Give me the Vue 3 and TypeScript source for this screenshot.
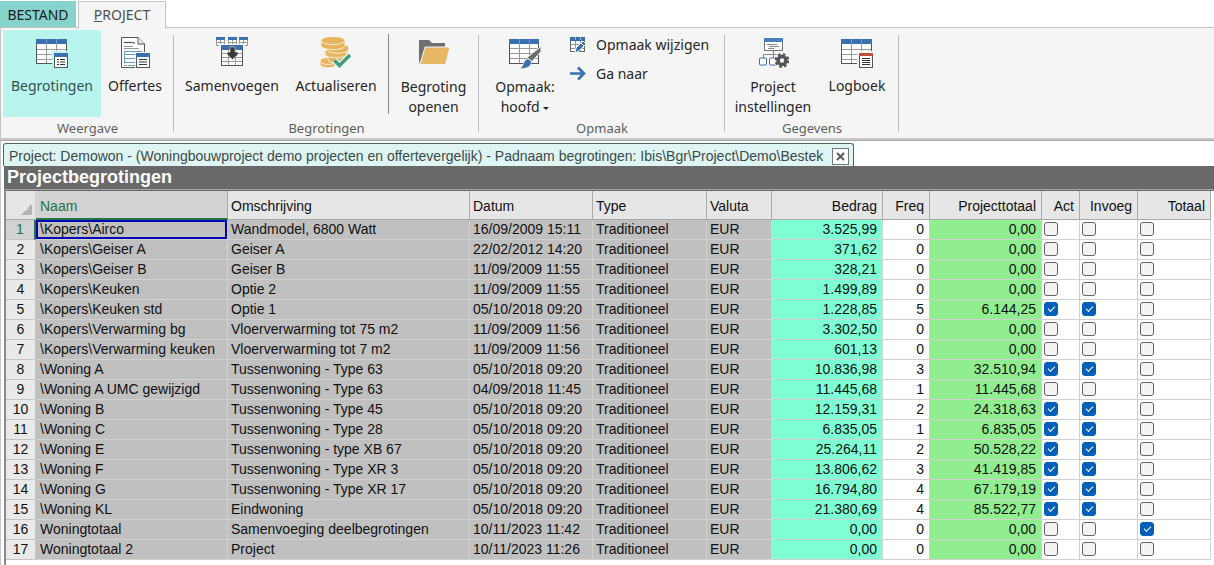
<script setup lang="ts">
import { ref } from 'vue'

interface Row {
  naam: string
  omschrijving: string
  datum: string
  bedrag: string
  freq: number
  totaal: string
  act: boolean
  invoeg: boolean
  tot: boolean
}

function row(naam: string, omschrijving: string, datum: string, bedrag: string, freq: number, totaal: string, actief = false, tot = false): Row {
  return { naam, omschrijving, datum, bedrag, freq, totaal, act: actief, invoeg: actief, tot }
}

const rows = ref<Row[]>([
  row('\\Kopers\\Airco', 'Wandmodel, 6800 Watt', '16/09/2009 15:11', '3.525,99', 0, '0,00'),
  row('\\Kopers\\Geiser A', 'Geiser A', '22/02/2012 14:20', '371,62', 0, '0,00'),
  row('\\Kopers\\Geiser B', 'Geiser B', '11/09/2009 11:55', '328,21', 0, '0,00'),
  row('\\Kopers\\Keuken', 'Optie 2', '11/09/2009 11:55', '1.499,89', 0, '0,00'),
  row('\\Kopers\\Keuken std', 'Optie 1', '05/10/2018 09:20', '1.228,85', 5, '6.144,25', true),
  row('\\Kopers\\Verwarming bg', 'Vloerverwarming tot 75 m2', '11/09/2009 11:56', '3.302,50', 0, '0,00'),
  row('\\Kopers\\Verwarming keuken', 'Vloerverwarming tot 7 m2', '11/09/2009 11:56', '601,13', 0, '0,00'),
  row('\\Woning A', 'Tussenwoning - Type 63', '05/10/2018 09:20', '10.836,98', 3, '32.510,94', true),
  row('\\Woning A UMC gewijzigd', 'Tussenwoning - Type 63', '04/09/2018 11:45', '11.445,68', 1, '11.445,68'),
  row('\\Woning B', 'Tussenwoning - Type 45', '05/10/2018 09:20', '12.159,31', 2, '24.318,63', true),
  row('\\Woning C', 'Tussenwoning - Type 28', '05/10/2018 09:20', '6.835,05', 1, '6.835,05', true),
  row('\\Woning E', 'Tussenwoning - type XB 67', '05/10/2018 09:20', '25.264,11', 2, '50.528,22', true),
  row('\\Woning F', 'Tussenwoning - Type XR 3', '05/10/2018 09:20', '13.806,62', 3, '41.419,85', true),
  row('\\Woning G', 'Tussenwoning - Type XR 17', '05/10/2018 09:20', '16.794,80', 4, '67.179,19', true),
  row('\\Woning KL', 'Eindwoning', '05/10/2018 09:20', '21.380,69', 4, '85.522,77', true),
  row('Woningtotaal', 'Samenvoeging deelbegrotingen', '10/11/2023 11:42', '0,00', 0, '0,00', false, true),
  row('Woningtotaal 2', 'Project', '10/11/2023 11:26', '0,00', 0, '0,00'),
])
const selected = ref(0)
</script>

<template>
  <div class="app">
    <nav class="tabs">
      <button class="tab file">BESTAND</button>
      <button class="tab current"><u>P</u>ROJECT</button>
    </nav>

    <header class="ribbon">
      <section class="group weergave">
        <div class="tools">
          <button class="big on">
            <svg class="icon" viewBox="0 0 32 32">
              <rect x=".5" y="2.5" width="30" height="24" fill="#fff" stroke="#555" />
              <path d="M1 12.5H30M1 17.5H30M1 22.5H30M10.5 7V26M20.5 7V26" stroke="#9a9a9a" fill="none" />
              <rect x="0" y="2" width="31" height="5" fill="#3a70ad" /><path d="M10.5 2V7M20.5 2V7" stroke="#6f9bc9" />
              <rect x="16" y="14" width="16" height="18" fill="#b9f5ee" />
              <rect x="18.5" y="16.5" width="13" height="14" fill="#fff" stroke="#555" />
              <rect x="18" y="16" width="14" height="4" fill="#3a70ad" />
              <path d="M21 22.5h2M24 22.5h5M21 25h2M24 25h5M21 27.5h2M24 27.5h5" stroke="#333" />
            </svg>
            <span>Begrotingen</span>
          </button>
          <button class="big">
            <svg class="icon" viewBox="0 0 32 32">
              <path d="M2.5.5H19L25.5 7V30.5H2.5Z" fill="#fff" stroke="#555" />
              <path d="M19 .5V7H25.5" fill="#eee" stroke="#555" />
              <path d="M5 6l1-1 2 1 1-1 2 1 1-1 2 1h2" stroke="#333" fill="none" />
              <path d="M5 9.5H14M5 11.5H20" stroke="#999" />
              <path d="M5 14.5H23M5.5 17.5H16M5.5 21.5H16M5 25.5H16M9 28.5H16" stroke="#6a9acb" />
              <path d="M5 28.5H8M5.5 14V25" stroke="#6a9acb" />
              <rect x="16" y="15" width="16" height="17" fill="#f5f5f5" />
              <rect x="17.5" y="16.5" width="13" height="14" fill="#fff" stroke="#555" />
              <rect x="17" y="16" width="14" height="4" fill="#3a70ad" />
              <path d="M20 22.5h8M20 25h8M20 27.5h8" stroke="#333" />
            </svg>
            <span>Offertes</span>
          </button>
        </div>
        <h2>Weergave</h2>
      </section>

      <section class="group begrotingen">
        <div class="tools">
          <button class="big wide">
            <svg class="icon" viewBox="0 0 32 32">
              <g v-for="x in [0, 12, 23]" :key="x">
                <path :d="`M${x + 0.5} 1V8.5H${x + 8.5}V1M${x + 4.5} 3V8M${x + 1} 5.5H${x + 8}`" fill="#fff" stroke="#999" />
                <rect :x="x" y="0" width="9" height="3" fill="#3a70ad" />
              </g>
              <rect x="3" y="7" width="26" height="23" fill="#f5f5f5" />
              <rect x="5.5" y="8.5" width="21" height="20" fill="#fff" stroke="#555" />
              <path d="M6 16.5H26M6 20.5H26M6 24.5H26M12.5 13V28M19.5 13V28" stroke="#999" />
              <rect x="5" y="8" width="22" height="5" fill="#3a70ad" />
              <path d="M14 10h5v5h3v2.5l-5.500 5L11 17.500V15h3Z" fill="#3b3b3b" stroke="#fff" stroke-width=".5" />
            </svg>
            <span>Samenvoegen</span>
          </button>
          <button class="big wide">
            <svg class="icon" viewBox="0 0 32 32">
              <g fill="#e8b45c" stroke="#f7efe1" stroke-width="1">
                <path d="M0 24v3c0 5 16 5 16 0v-3Z" /><ellipse cx="8" cy="24" rx="8" ry="3.5" />
                <path d="M8 17.5v5c0 5 20 5 20 0v-5Z" />
                <path d="M5 13v4c0 5 22 5 22 0v-4Z" />
                <path d="M7 8.5v4c0 5 21.5 5 21.5 0v-4Z" />
                <path d="M1 3.5v5c0 5.5 24 5.5 24 0v-5Z" />
                <ellipse cx="13" cy="3.5" rx="12" ry="4" />
              </g>
              <path d="M14.5 23.5l5 5L30 18" stroke="#f5f5f5" stroke-width="6" fill="none" />
              <path d="M14.5 23.5l5 5L30 18" stroke="#3f9e7c" stroke-width="3.5" fill="none" />
            </svg>
            <span>Actualiseren</span>
          </button>
          <button class="big split">
            <svg class="icon" viewBox="0 0 32 32">
              <path d="M1 3h10l3 3h13v8H7L1 27Z" fill="#6f6f6f" />
              <path d="M7 10H32L27.5 27.5H2Z" fill="#e8b765" stroke="#f5f5f5" />
            </svg>
            <span class="double">Begroting<br />openen</span>
          </button>
        </div>
        <h2>Begrotingen</h2>
      </section>

      <section class="group opmaak">
        <div class="tools">
          <button class="big">
            <svg class="icon" viewBox="0 0 32 32">
              <rect x=".5" y="2.5" width="29" height="24" fill="#fff" stroke="#555" />
              <path d="M1 11.5H29M1 16.5H29M1 21.5H29M10.5 7V26M20.5 7V26" stroke="#9a9a9a" />
              <rect x="0" y="2" width="30" height="5" fill="#3a70ad" /><path d="M10.5 2V7M20.5 2V7" stroke="#6f9bc9" />
              <path d="M32 9.5v5l-9 10-5-4Z" fill="#6b6b6b" stroke="#f5f5f5" />
              <path d="M18 22c3 0 5 2 4 5s-6 5-11 4.5c4-2 3-8 7-9.5Z" fill="#3a70ad" stroke="#f5f5f5" stroke-width=".6" />
            </svg>
            <span class="double">Opmaak:<br />hoofd <i class="caret"></i></span>
          </button>
          <div class="stack">
            <button class="small">
              <svg class="mini" viewBox="0 0 16 16">
                <rect x=".5" y=".5" width="14" height="14" fill="#fff" stroke="#666" />
                <path d="M1 7.5H14M1 11.5H14M5.5 4V14M10.5 4V14" stroke="#999" />
                <rect x="0" y="0" width="15" height="4" fill="#3a70ad" /><path d="M5.5 0V3M10.5 0V3" stroke="#9bbcdc" />
                <path d="M5 16l1-5 7-7 3 3-7 7Z" fill="#3a70ad" stroke="#fff" /><path d="M11 6l3 3" stroke="#fff" />
              </svg>
              Opmaak wijzigen
            </button>
            <button class="small">
              <svg class="mini" viewBox="0 0 16 16">
                <path d="M0 7.5H14M8 1.5l6 6-6 6" fill="none" stroke="#3a70ad" stroke-width="2.6" />
              </svg>
              Ga naar
            </button>
          </div>
        </div>
        <h2>Opmaak</h2>
      </section>

      <section class="group gegevens">
        <div class="tools">
          <button class="big">
            <svg class="icon" viewBox="-2 0 32 32">
              <rect x="5.5" y="1.5" width="18" height="12" fill="#fff" stroke="#777" />
              <rect x="5" y="1" width="19" height="4" fill="#4b80b8" />
              <path d="M8 7.5h10M10 9.5h10M9 11.5h6M14.5 14v3M4.5 21v-3.5h20V21M14.5 17v4" stroke="#888" fill="none" />
              <rect x=".5" y="21" width="7" height="7" rx="1" fill="#fff" stroke="#3a70ad" />
              <rect x="10.5" y="21" width="7" height="7" rx="1" fill="#fff" stroke="#3a70ad" />
              <circle cx="23" cy="23.5" r="8" fill="#f5f5f5" />
              <circle cx="23" cy="23.5" r="4" fill="none" stroke="#555" stroke-width="3.5" />
              <circle cx="23" cy="23.5" r="6.2" fill="none" stroke="#555" stroke-width="2.4" stroke-dasharray="2.6 2.27" />
            </svg>
            <span class="double">Project<br />instellingen</span>
          </button>
          <button class="big">
            <svg class="icon" viewBox="0 0 32 32">
              <rect x=".5" y="2.5" width="30" height="24" fill="#fff" stroke="#555" />
              <path d="M1 12.5H30M1 17.5H30M1 22.5H30M10.5 7V26M20.5 7V26" stroke="#9a9a9a" />
              <rect x="0" y="2" width="31" height="5" fill="#3a70ad" /><path d="M10.5 2V7M20.5 2V7" stroke="#6f9bc9" />
              <rect x="16" y="14" width="16" height="18" fill="#f5f5f5" />
              <rect x="18.5" y="16.5" width="13" height="14" fill="#fff" stroke="#555" />
              <rect x="18" y="16" width="14" height="3" fill="#c0503e" />
              <path d="M21 21.5h8M21 23.5h8M21 25.5h8M21 27.5h8" stroke="#333" />
            </svg>
            <span>Logboek</span>
          </button>
        </div>
        <h2>Gegevens</h2>
      </section>
    </header>

    <main class="panel">
      <div class="doc-tab">
        <span>Project: Demowon - (Woningbouwproject demo projecten en offertevergelijk) - Padnaam begrotingen: Ibis\Bgr\Project\Demo\Bestek</span>
        <button class="close" aria-label="Sluiten">
          <svg viewBox="0 0 9 9"><path d="M1 1l7 7M8 1l-7 7" stroke="#5a5a5a" stroke-width="2" /></svg>
        </button>
      </div>
      <h1>Projectbegrotingen</h1>
      <div class="sheet">
        <table>
          <colgroup>
            <col class="c-nr" /><col class="c-naam" /><col /><col class="c-datum" /><col class="c-type" /><col class="c-valuta" />
            <col class="c-bedrag" /><col class="c-freq" /><col class="c-ptot" /><col class="c-act" /><col class="c-inv" /><col class="c-tot" />
          </colgroup>
          <thead>
            <tr>
              <th class="corner" aria-label="Alles selecteren"></th>
              <th class="active">Naam</th>
              <th>Omschrijving</th>
              <th>Datum</th>
              <th>Type</th>
              <th>Valuta</th>
              <th class="num">Bedrag</th>
              <th class="num">Freq</th>
              <th class="num">Projecttotaal</th>
              <th class="num">Act</th>
              <th class="num">Invoeg</th>
              <th class="num">Totaal</th>
            </tr>
          </thead>
          <tbody>
            <tr v-for="(r, i) in rows" :key="i" @click="selected = i">
              <th scope="row" :class="{ picked: selected === i }">{{ i + 1 }}</th>
              <td class="grey" :class="{ focus: selected === i }">{{ r.naam }}</td>
              <td class="grey">{{ r.omschrijving }}</td>
              <td class="grey">{{ r.datum }}</td>
              <td class="grey">Traditioneel</td>
              <td class="grey">EUR</td>
              <td class="num aqua">{{ r.bedrag }}</td>
              <td class="num">{{ r.freq }}</td>
              <td class="num green">{{ r.totaal }}</td>
              <td class="box"><input v-model="r.act" type="checkbox" :aria-label="`Act ${r.naam}`" /></td>
              <td class="box"><input v-model="r.invoeg" type="checkbox" :aria-label="`Invoeg ${r.naam}`" /></td>
              <td class="box"><input v-model="r.tot" type="checkbox" :aria-label="`Totaal ${r.naam}`" /></td>
            </tr>
          </tbody>
        </table>
      </div>
    </main>
  </div>
</template>

<style>
body {
  margin: 0;
  background: #fff;
}
</style>

<style scoped>
.app {
  display: flex;
  flex-direction: column;
  min-height: 100vh;
  font-family: "Noto Sans", "Open Sans", sans-serif;
  font-size: 14px;
  color: #262626;
}
* {
  box-sizing: border-box;
}
button {
  margin: 0;
  padding: 0;
  border: 0;
  background: none;
  font: inherit;
  color: inherit;
}
.tabs {
  display: flex;
  gap: 2px;
  height: 28px;
  padding-top: 1px;
}
.tab {
  width: 76px;
  height: 26px;
  color: #1c1c1c;
}
.tab.file {
  background: #85d3cb;
}
.tab.current {
  z-index: 1;
  width: 88px;
  height: 28px;
  padding-bottom: 2px;
  border: 1px solid #c4c4c4;
  border-bottom: 0;
  background: #f5f5f5;
  color: #4a5252;
}
.ribbon {
  display: flex;
  margin-top: -1px;
  border: 1px solid #c4c4c4;
  border-right: 0;
  border-bottom: 2px solid #c9c9c9;
  background: #f5f5f5;
}
.group {
  display: flex;
  flex-direction: column;
  position: relative;
  padding-top: 2px;
}
.group::after {
  content: "";
  position: absolute;
  top: 7px;
  right: 0;
  bottom: 6px;
  width: 1px;
  background: #bdbdbd;
}
.weergave { width: 173px; }
.begrotingen { width: 305px; }
.opmaak { width: 246px; }
.gegevens { width: 174px; }
.tools {
  display: flex;
  height: 87px;
  padding-left: 6px;
}
.weergave .tools {
  padding-left: 2px;
}
.group h2 {
  margin: 0;
  padding-top: 1px;
  font-size: 13px;
  line-height: 20px;
  font-weight: 400;
  text-align: center;
  color: #5f5f5f;
}
.big {
  display: flex;
  flex: none;
  flex-direction: column;
  align-items: center;
  width: 98px;
  padding-top: 7px;
  line-height: 20px;
  white-space: nowrap;
}
.big span {
  margin-top: 7px;
}
.big .double {
  margin-top: 8px;
}
.weergave .big + .big {
  width: 68px;
}
.big.on {
  background: #b7f5ee;
  color: #36504e;
}
.big.wide {
  width: 104px;
}
.big.split {
  width: 90px;
  height: 80px;
  margin-top: 4px;
  padding-top: 3px;
  border-left: 1px solid #8a8a8a;
}
.opmaak .big { width: 80px; }
.gegevens .big { width: 84px; }
.icon {
  flex: none;
  width: 32px;
  height: 32px;
}
.caret {
  display: inline-block;
  border: 3px solid transparent;
  border-top-color: #262626;
  border-bottom: 0;
  vertical-align: middle;
}
.stack {
  display: flex;
  flex-direction: column;
  padding-left: 5px;
}
.small {
  display: flex;
  align-items: center;
  gap: 10px;
  height: 29px;
  white-space: nowrap;
}
.mini {
  width: 16px;
  height: 16px;
}
.panel {
  flex: 1;
  display: flex;
  flex-direction: column;
  padding: 2px 0 0 2px;
  border-top: 1px solid #a8a8a8;
  border-left: 1px solid #c4c4c4;
  font-family: "Liberation Sans", Arial, sans-serif;
}
.doc-tab {
  display: flex;
  align-self: flex-start;
  align-items: center;
  gap: 9px;
  height: 23px;
  padding: 2px 4px 0 5px;
  border: 1px solid #4d6664;
  border-bottom: 0;
  border-radius: 3px 3px 0 0;
  background: #def5f3;
  color: #3d4a49;
  white-space: nowrap;
}
.close {
  display: flex;
  align-items: center;
  justify-content: center;
  width: 17px;
  height: 17px;
  border: 1px solid #777;
  background: #fff;
}
.close svg {
  width: 9px;
  height: 9px;
}
h1 {
  margin: 0 0 0 1px;
  padding: 0 0 0 3px;
  background: #696969;
  color: #fff;
  font-size: 18px;
  line-height: 23px;
}
.sheet {
  flex: 1;
  margin-left: 1px;
  padding-right: 3px;
  border-top: 1px solid #a5a5a5;
  border-left: 2px solid #8c8c8c;
  box-shadow: inset 0 1px #696969;
}
table {
  width: 100%;
  margin-top: 1px;
  border-spacing: 0;
  table-layout: fixed;
  font-size: 14px;
  color: #111;
}
.c-nr { width: 30px; }
.c-naam { width: 192px; }
.c-datum { width: 123px; }
.c-type { width: 114px; }
.c-valuta { width: 65px; }
.c-bedrag { width: 111px; }
.c-freq { width: 47px; }
.c-ptot { width: 112px; }
.c-act { width: 38px; }
.c-inv { width: 58px; }
.c-tot { width: 73px; }
th, td {
  height: 20px;
  padding: 0 5px 1px 3px;
  border-right: 1px solid #d0d0d0;
  border-bottom: 1px solid #d0d0d0;
  line-height: 18px;
  font-weight: 400;
  text-align: left;
  white-space: nowrap;
}
thead th {
  height: 29px;
  padding-top: 2px;
  padding-bottom: 0;
  border-color: #a9a9a9;
  background: #e6e6e6;
}
thead .active {
  padding-top: 3px;
  border-bottom: 2px solid #217346;
  background: #d2d2d2;
  color: #217346;
}
th.active, td:nth-child(2) {
  padding-left: 4px;
}
.corner {
  border-right-color: #d2d2d2;
  background: linear-gradient(135deg, transparent 50%, #b3b3b3 50%) no-repeat 15px 13px / 11px 11px #e6e6e6;
}
tbody th {
  padding: 0 0 1px;
  border-color: #c4c4c4;
  background: #e9e9e9;
  text-align: center;
}
tbody .picked {
  border-right: 2px solid #217346;
  background: #d2d2d2;
  color: #217346;
}
.grey {
  background: #c0c0c0;
}
.focus {
  box-shadow: inset 0 0 0 2px #0000b4;
}
th.num, td.num {
  padding-right: 5px;
  text-align: right;
}
.aqua {
  background: #7fffd4;
}
.green {
  background: #90ee90;
}
td.box {
  padding: 0 0 1px 2px;
}
input {
  display: block;
  appearance: none;
  position: relative;
  width: 14px;
  height: 14px;
  margin: 0;
  border: 1px solid #636363;
  border-radius: 3px;
  background: #f3f3f3;
}
input:checked {
  border-color: #005fb8;
  background: #005fb8;
}
input:checked::after {
  content: "";
  position: absolute;
  top: 3px;
  left: 3px;
  width: 6px;
  height: 3px;
  border: solid #fff;
  border-width: 0 0 1px 1px;
  transform: rotate(-45deg);
}
</style>
